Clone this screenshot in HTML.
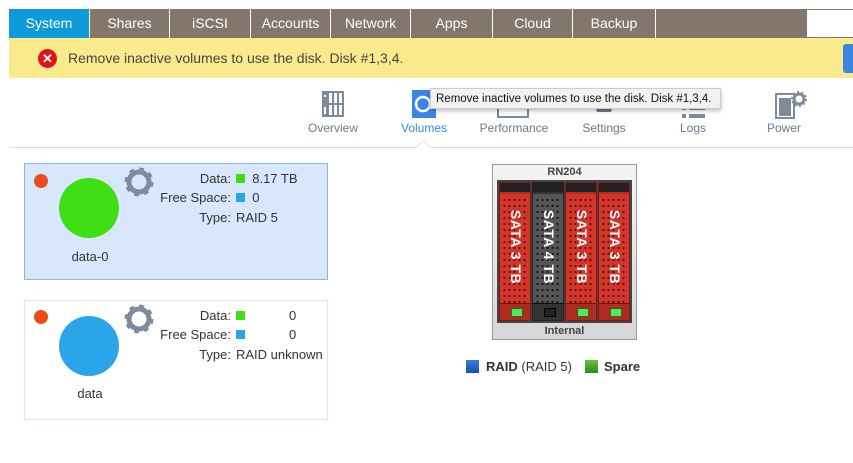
<!DOCTYPE html>
<html><head><meta charset="utf-8"><style>
body{margin:0;width:853px;height:463px;background:#fff;font-family:"Liberation Sans",sans-serif;position:relative;overflow:hidden}
.a{position:absolute}
.tab{position:absolute;top:9px;height:29px;background:#83776d;color:#fff;font-size:14px;line-height:29px;text-align:center;border-right:1px solid #fff;box-sizing:border-box}
.lbl{position:absolute;top:121px;font-size:12px;color:#6c7a8c;text-align:center;width:90px}
.ico{position:absolute;top:90px}
.card{position:absolute;left:24px;width:304px;box-sizing:border-box;border:1px solid #8fb3e6}
.row{position:absolute;font-size:13px;color:#333;white-space:nowrap}
.sq{display:inline-block;width:9px;height:9px;vertical-align:0}
.bay{position:absolute;top:182px;width:32px;height:139px;background:#d3352b;border:1px solid #7a1c15;box-sizing:border-box}
.bay .h{position:absolute;left:0;right:0;top:0;height:9px;background:#222;border-bottom:2px solid #b52a22}
.bay .p{position:absolute;left:2px;right:2px;top:14px;height:108px;background-image:radial-gradient(circle,#5a0f0b 0.9px,transparent 1.3px);background-size:5px 6px}
.bay .t{position:absolute;left:-38px;top:54px;width:108px;height:20px;transform:rotate(90deg);color:#fff;font-weight:bold;font-size:14px;text-align:center;line-height:20px;letter-spacing:0.5px}
.bay .l{position:absolute;left:0;right:0;bottom:0;height:16px;background:#b12a22;border-top:1px solid #6d1711}
.bay .l i{position:absolute;left:11px;top:4px;width:10px;height:7px;background:#5be35b;border:1px solid #1d6e1d}
</style></head><body>
<div class="a" style="left:9px;top:9px;width:844px;height:29px;background:#83776d"></div>
<div class="tab" style="left:9px;width:81px;background:#0c9bd8">System</div>
<div class="tab" style="left:90px;width:80px">Shares</div>
<div class="tab" style="left:170px;width:81px">iSCSI</div>
<div class="tab" style="left:251px;width:80px">Accounts</div>
<div class="tab" style="left:331px;width:80px">Network</div>
<div class="tab" style="left:411px;width:82px">Apps</div>
<div class="tab" style="left:493px;width:80px">Cloud</div>
<div class="tab" style="left:573px;width:83px">Backup</div>
<div class="a" style="left:807px;top:10px;width:46px;height:27px;background:#fff"></div>
<div class="a" style="left:9px;top:38px;width:844px;height:40px;background:#fbe98d"></div>
<div class="a" style="left:843px;top:44px;width:10px;height:29px;background:#3a86e0;border-radius:3px 0 0 3px"></div>
<div class="a" style="left:38px;top:49px;width:19px;height:19px;border-radius:50%;background:#e0141b;color:#fff;font-weight:bold;font-size:13px;line-height:19px;text-align:center">✕</div>
<div class="a" style="left:68px;top:50px;font-size:14px;color:#444">Remove inactive volumes to use the disk. Disk #1,3,4.</div>

<svg class="ico" style="left:321px" width="24" height="28"><rect x="1" y="1" width="22" height="26" fill="#7f8a9c"/><g fill="#fff"><rect x="8" y="3" width="3" height="10"/><rect x="13" y="3" width="3" height="10"/><rect x="18" y="3" width="3" height="10"/><rect x="8" y="15" width="3" height="10"/><rect x="13" y="15" width="3" height="10"/><rect x="18" y="15" width="3" height="10"/><rect x="3" y="5" width="2" height="2"/><rect x="3" y="17" width="2" height="7"/></g></svg>
<svg class="ico" style="left:412px" width="24" height="28"><rect x="0" y="0" width="24" height="28" fill="#3a86e8"/><circle cx="11" cy="14" r="7" fill="none" stroke="#fff" stroke-width="2.5"/></svg>
<svg class="ico" style="left:497px;top:100px" width="34" height="18"><rect x="1" y="1" width="30" height="16" fill="none" stroke="#7f8a9c" stroke-width="2"/></svg>
<svg class="ico" style="left:592px;top:102px" width="24" height="16"><path d="M2 0h20l-3 10h-14z" fill="#6c7a8c"/></svg>
<svg class="ico" style="left:682px;top:104px" width="24" height="14"><rect x="0" y="2" width="4" height="4" fill="#7f8a9c"/><rect x="7" y="2" width="16" height="4" fill="#7f8a9c"/><rect x="0" y="10" width="4" height="4" fill="#7f8a9c"/><rect x="7" y="10" width="16" height="4" fill="#7f8a9c"/></svg>
<svg class="ico" style="left:774px" width="34" height="30"><rect x="2" y="4" width="18" height="24" fill="none" stroke="#7f8a9c" stroke-width="2"/><rect x="5" y="8" width="12" height="18" fill="#7f8a9c"/><circle cx="25" cy="9" r="5" fill="none" stroke="#7f8a9c" stroke-width="3"/><circle cx="25" cy="9" r="7" fill="none" stroke="#7f8a9c" stroke-width="2" stroke-dasharray="2 2.4"/></svg>
<div class="lbl" style="left:288px">Overview</div>
<div class="lbl" style="left:379px;color:#3a86e8">Volumes</div>
<div class="lbl" style="left:469px">Performance</div>
<div class="lbl" style="left:559px">Settings</div>
<div class="lbl" style="left:648px">Logs</div>
<div class="lbl" style="left:739px">Power</div>
<div class="a" style="left:430px;top:88px;width:291px;height:21px;background:#f2f2f2;border:1px solid #ccc;box-shadow:0 2px 4px rgba(0,0,0,.25);font-size:11.5px;line-height:21px;color:#111;padding-left:5px;box-sizing:border-box;white-space:nowrap">Remove inactive volumes to use the disk. Disk #1,3,4.</div>
<div class="a" style="left:9px;top:147px;width:844px;height:1px;background:#ddd"></div>
<div class="a" style="left:418px;top:142px;width:10px;height:10px;background:#fff;border-left:1px solid #ddd;border-top:1px solid #ddd;transform:rotate(45deg)"></div>

<div class="card" style="top:163px;height:117px;background:#d8e7fc"></div>
<div class="card" style="top:300px;height:120px;background:#fff;border-color:#d3e2f5"></div>
<div class="a" style="left:34px;top:174px;width:14px;height:14px;border-radius:50%;background:#ea4c1c"></div>
<div class="a" style="left:59px;top:178px;width:60px;height:60px;border-radius:50%;background:#3fdd13"></div>
<div class="a" style="left:55px;top:249px;width:70px;text-align:center;font-size:13px;color:#333">data-0</div>
<div class="a" style="left:34px;top:310px;width:14px;height:14px;border-radius:50%;background:#ea4c1c"></div>
<div class="a" style="left:59px;top:316px;width:60px;height:60px;border-radius:50%;background:#2ba5ea"></div>
<div class="a" style="left:55px;top:386px;width:70px;text-align:center;font-size:13px;color:#333">data</div>
<svg class="a" style="left:124px;top:167px" width="30" height="30"><circle cx="15" cy="15" r="10" fill="none" stroke="#7f8a9c" stroke-width="5"/><circle cx="15" cy="15" r="12.5" fill="none" stroke="#7f8a9c" stroke-width="4" stroke-dasharray="4.5 5.3"/></svg>
<svg class="a" style="left:124px;top:304px" width="30" height="30"><circle cx="15" cy="15" r="10" fill="none" stroke="#7f8a9c" stroke-width="5"/><circle cx="15" cy="15" r="12.5" fill="none" stroke="#7f8a9c" stroke-width="4" stroke-dasharray="4.5 5.3"/></svg>
<div class="row" style="right:622px;top:171px">Data:</div>
<div class="row" style="right:622px;top:190px">Free Space:</div>
<div class="row" style="right:622px;top:210px">Type:</div>
<div class="row" style="left:236px;top:171px"><span class="sq" style="background:#3fdd13"></span>&nbsp; 8.17 TB</div>
<div class="row" style="left:236px;top:190px"><span class="sq" style="background:#2ba5ea"></span>&nbsp; 0</div>
<div class="row" style="left:236px;top:210px">RAID 5</div>
<div class="row" style="right:622px;top:308px">Data:</div>
<div class="row" style="right:622px;top:327px">Free Space:</div>
<div class="row" style="right:622px;top:347px">Type:</div>
<div class="row" style="left:236px;top:308px"><span class="sq" style="background:#3fdd13"></span></div>
<div class="row" style="left:289px;top:308px">0</div>
<div class="row" style="left:236px;top:327px"><span class="sq" style="background:#2ba5ea"></span></div>
<div class="row" style="left:289px;top:327px">0</div>
<div class="row" style="left:236px;top:347px">RAID unknown</div>

<div class="a" style="left:492px;top:164px;width:145px;height:176px;background:linear-gradient(#f4f4f4,#d6d6d6);border:1px solid #999;box-sizing:border-box"></div>
<div class="a" style="left:492px;top:166px;width:145px;text-align:center;font-size:11px;font-weight:bold;color:#444">RN204</div>
<div class="a" style="left:497px;top:180px;width:135px;height:143px;background:#444"></div>
<div class="bay" style="left:499px"><div class="h"></div><div class="p"></div><div class="t">SATA 3 TB</div><div class="l"><i></i></div></div>
<div class="bay" style="left:532px;background:#555;border-color:#222"><div class="h" style="border-color:#333"></div><div class="p" style="background-image:radial-gradient(circle,#111 0.9px,transparent 1.3px)"></div><div class="t">SATA 4 TB</div><div class="l" style="background:#333;border-color:#111"><i style="background:#222;border-color:#000"></i></div></div>
<div class="bay" style="left:565px"><div class="h"></div><div class="p"></div><div class="t">SATA 3 TB</div><div class="l"><i></i></div></div>
<div class="bay" style="left:598px"><div class="h"></div><div class="p"></div><div class="t">SATA 3 TB</div><div class="l"><i></i></div></div>
<div class="a" style="left:492px;top:325px;width:145px;text-align:center;font-size:11px;font-weight:bold;color:#444">Internal</div>

<div class="a" style="left:466px;top:360px;width:13px;height:13px;background:linear-gradient(#3d7be0,#1a4fb0)"></div>
<div class="a" style="left:486px;top:359px;font-size:13px;color:#333"><b>RAID</b> (RAID 5)</div>
<div class="a" style="left:585px;top:360px;width:13px;height:13px;background:linear-gradient(#6ac33a,#2f8a18)"></div>
<div class="a" style="left:604px;top:359px;font-size:13px;color:#333;font-weight:bold">Spare</div>
</body></html>
